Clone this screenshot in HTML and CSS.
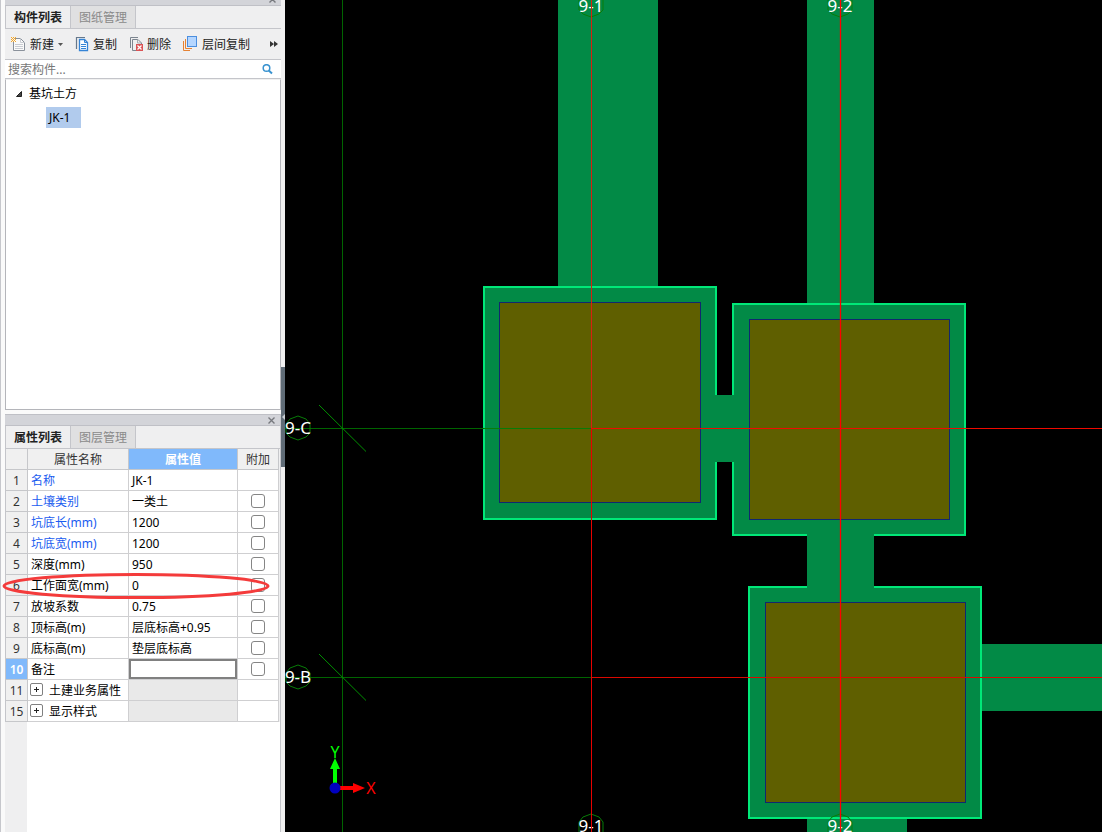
FILE: index.html
```html
<!DOCTYPE html>
<html lang="zh-CN">
<head>
<meta charset="utf-8">
<title>构件列表</title>
<link rel="stylesheet" href="styles.css">
</head>
<body>
<div class="app">
  <aside class="sidebar">
    <section class="panel components">
      <div class="titlebar cut"><button class="close" aria-label="关闭"><svg width="7" height="7" viewBox="0 0 7 7"><path d="M0.5 0.5L6.5 6.5M6.5 0.5L0.5 6.5"/></svg></button></div>
      <div class="tabs">
        <button class="tab active">构件列表</button>
        <button class="tab">图纸管理</button>
      </div>
      <div class="toolbar">
        <button class="tool new">
          <svg width="16" height="16" viewBox="0 0 16 16"><path d="M5 2.500H10.500L14.500 6.500V14.500H3.500V6" fill="#fafafa" stroke="#8a919b"/><path d="M10.500 2.500V6.500H14.500M5 8.500H13M5 10.500H13M5 12.500H13" fill="none" stroke="#c9ccd2"/><path d="M1 1.500H6M1 3.500H6M1 5.500H6" stroke="#f6a828" stroke-dasharray="1 1"/><path d="M2 2.500H5M2 4.500H5" stroke="#f6a828" stroke-dasharray="1 1"/></svg>
          <span>新建</span><svg class="caret" width="5" height="3" viewBox="0 0 5 3"><path d="M0 0H5L2.500 3Z" fill="#555"/></svg>
        </button>
        <button class="tool copy">
          <svg width="14" height="16" viewBox="0 0 14 16"><path d="M1.500 13V1.500H10" fill="none" stroke="#66788c" stroke-width="1.200"/><path d="M4.500 3.500H9.500L12.500 6.500V14.500H4.500Z" fill="#fff" stroke="#3584d6" stroke-width="1.300"/><path d="M9.500 3.500V6.500H12.500M6 8.500H11M6 10.500H11M6 12.500H11" fill="none" stroke="#3584d6"/></svg>
          <span>复制</span>
        </button>
        <button class="tool delete">
          <svg width="15" height="16" viewBox="0 0 15 16"><path d="M1.500 12V1.500H9" fill="none" stroke="#7c858f"/><path d="M7 14.500H3.500V3.500H9L12.500 7V8" fill="none" stroke="#7c858f"/><path d="M8.500 3.500V7H12" fill="none" stroke="#a8adb3"/><rect x="7" y="8" width="7" height="7" fill="#db5355"/><path d="M8.500 9.500L12.500 13.500M12.500 9.500L8.500 13.500" stroke="#fff" stroke-width="1.200"/></svg>
          <span>删除</span>
        </button>
        <button class="tool floor">
          <svg width="15" height="16" viewBox="0 0 15 16"><path d="M0.500 5V14.500H7M2.500 3V12.500H9" fill="none" stroke="#e58234"/><rect x="4.500" y="0.500" width="9" height="10" fill="#b5d6ff" stroke="#4c8ede"/></svg>
          <span>层间复制</span>
        </button>
        <button class="more" aria-label="更多"><svg width="8" height="6" viewBox="0 0 8 6"><path d="M0 0L4 3L0 6ZM4 0L8 3L4 6Z" fill="#333"/></svg></button>
      </div>
      <div class="search">
        <input type="text" placeholder="搜索构件..." aria-label="搜索构件">
        <svg width="11" height="11" viewBox="0 0 11 11"><circle cx="4.500" cy="4" r="3.300" fill="none" stroke="#3a93d0" stroke-width="1.500"/><path d="M6.800 6.500L10 9.500" stroke="#3a93d0" stroke-width="2"/></svg>
      </div>
      <div class="tree">
        <div class="node"><svg width="6" height="6" viewBox="0 0 6 6"><path d="M5.500 0.500V5.500H0.500Z" fill="#444" stroke="#222"/></svg><span>基坑土方</span></div>
        <div class="leaf"><span>JK-1</span></div>
      </div>
    </section>
    <section class="panel properties">
      <div class="titlebar"><button class="close" aria-label="关闭"><svg width="7" height="7" viewBox="0 0 7 7"><path d="M0.500 0.500L6.500 6.500M6.500 0.500L0.500 6.500"/></svg></button></div>
      <div class="tabs">
        <button class="tab active">属性列表</button>
        <button class="tab">图层管理</button>
      </div>
      <table class="grid">
        <colgroup><col class="c-num"><col class="c-name"><col class="c-value"><col class="c-add"></colgroup>
        <thead><tr><th></th><th>属性名称</th><th class="current">属性值</th><th>附加</th></tr></thead>
        <tbody>
          <tr><th>1</th><td class="key">名称</td><td>JK-1</td><td></td></tr>
          <tr><th>2</th><td class="key">土壤类别</td><td>一类土</td><td class="add"><input type="checkbox" aria-label="附加 土壤类别"></td></tr>
          <tr><th>3</th><td class="key">坑底长(mm)</td><td>1200</td><td class="add"><input type="checkbox" aria-label="附加 坑底长"></td></tr>
          <tr><th>4</th><td class="key">坑底宽(mm)</td><td>1200</td><td class="add"><input type="checkbox" aria-label="附加 坑底宽"></td></tr>
          <tr><th>5</th><td>深度(mm)</td><td>950</td><td class="add"><input type="checkbox" aria-label="附加 深度"></td></tr>
          <tr><th class="marked">6<svg class="ring" width="268" height="28" viewBox="0 0 268 28"><ellipse cx="134" cy="14" rx="132" ry="11.500" fill="none" stroke="#f43b3b" stroke-width="3"/></svg></th><td>工作面宽(mm)</td><td>0</td><td class="add"><input type="checkbox" aria-label="附加 工作面宽"></td></tr>
          <tr><th>7</th><td>放坡系数</td><td>0.75</td><td class="add"><input type="checkbox" aria-label="附加 放坡系数"></td></tr>
          <tr><th>8</th><td>顶标高(m)</td><td>层底标高+0.95</td><td class="add"><input type="checkbox" aria-label="附加 顶标高"></td></tr>
          <tr><th>9</th><td>底标高(m)</td><td>垫层底标高</td><td class="add"><input type="checkbox" aria-label="附加 底标高"></td></tr>
          <tr><th class="current">10</th><td>备注</td><td class="edit"><input type="text" aria-label="备注"></td><td class="add"><input type="checkbox" aria-label="附加 备注"></td></tr>
          <tr><th>11</th><td class="group"><div><button class="expand" aria-label="展开"><svg width="5" height="5" viewBox="0 0 5 5"><path d="M0 2.500H5M2.500 0V5"/></svg></button><span>土建业务属性</span></div></td><td class="off"></td><td></td></tr>
          <tr><th>15</th><td class="group"><div><button class="expand" aria-label="展开"><svg width="5" height="5" viewBox="0 0 5 5"><path d="M0 2.500H5M2.500 0V5"/></svg></button><span>显示样式</span></div></td><td class="off"></td><td></td></tr>
        </tbody>
      </table>
      <div class="rest"></div>
    </section>
  </aside>
  <div class="splitter"><button class="handle" aria-label="收起"><svg width="4" height="6" viewBox="0 0 4 6"><path d="M4 0V6L1 3Z" fill="#c8ced4"/></svg></button></div>
  <main class="canvas">
    <svg class="drawing" width="100%" height="100%">
      <g transform="translate(-285 0)">
        <g fill="#028a46">
          <rect x="558" y="0" width="100" height="287"/>
          <rect x="807" y="0" width="67" height="304"/>
          <rect x="807" y="819" width="100" height="400"/>
          <rect x="982" y="644" width="1000" height="67"/>
        </g>
        <g fill="#028a46" stroke="#00e878" stroke-width="2">
          <rect x="484" y="287" width="232" height="232"/>
          <rect x="733" y="304" width="232" height="231"/>
          <rect x="749" y="587" width="232" height="231"/>
        </g>
        <g fill="#028a46">
          <rect x="714" y="395" width="21" height="67"/>
          <rect x="807" y="533" width="67" height="56"/>
        </g>
        <g fill="#5f5f00" stroke="#102870">
          <rect x="499.500" y="302.500" width="201" height="200"/>
          <rect x="749.500" y="319.500" width="200" height="200"/>
          <rect x="765.500" y="602.500" width="200" height="200"/>
        </g>
        <g fill="none" stroke="#087c08">
          <path d="M342.500 0V2000M285 428.500H591M285 677.500H591" stroke="#006400"/>
          <path d="M484 428.500H591"/>
          <path d="M319 405L366 451.500M319 654L366 700.500" stroke="#009000"/>
          <path d="M298 416L306 419L310 424V433L306 437L298 440L290 437L286 433V424L290 419ZM298 665L306 668L310 673V682L306 686L298 689L290 686L286 682V673L290 668Z"/>
          <path d="M579 0V10L583 14L591 17L599 14L603 10V0M828 0V10L832 14L840 17L848 14L852 10V0M579 832V822L583 817L591 814L599 817L603 822V832M828 832V822L832 817L840 814L848 817L852 822V832"/>
        </g>
        <g class="axis-label" text-anchor="middle">
          <text x="298" y="434">9-C</text><text x="298" y="683">9-B</text>
          <text x="591" y="12">9-1</text><text x="840" y="12">9-2</text>
          <text x="591" y="832">9-1</text><text x="840" y="832">9-2</text>
        </g>
        <g fill="none">
          <path d="M591.500 0V428" stroke="#d82010"/>
          <path d="M591.500 428V2000" stroke="#e80000"/>
          <path d="M591 428.500H2000" stroke="#f00a00"/>
          <path d="M591 677.500H2000" stroke="#dc0800"/>
          <path d="M840.500 0V2000" stroke="#f00" stroke-width="1.300"/>
        </g>
        <path d="M333 786V769H330L335 758L340 769H337V786Z" fill="#0f0"/>
        <path d="M338 786H353V783L365 788L353 793V790H338Z" fill="#f00"/>
        <circle cx="335" cy="788" r="5.500" fill="#0000c0"/>
        <g class="ucs" text-anchor="middle"><text x="335" y="758" fill="#0f0">Y</text><text x="371" y="794" fill="#f00">X</text></g>
      </g>
    </svg>
  </main>
</div>
</body>
</html>
```

FILE: styles.css
```css
* { box-sizing: border-box; }
body {
  margin: 0;
  font: 12px/16px "Noto Sans", "Noto Sans CJK SC", sans-serif;
  color: #000;
}
button, input { font: inherit; color: inherit; margin: 0; padding: 0; border: 0; background: none; }
svg { display: block; flex: none; }

.app { display: flex; height: 100vh; overflow: hidden; background: #f0f0f0; }
.sidebar {
  flex: none;
  width: 281px;
  display: flex;
  flex-direction: column;
  gap: 4px;
  padding-left: 4px;
  border-left: 1px solid #c6c7cc;
  background: #fafafa;
}
.panel { display: flex; flex-direction: column; background: #efeff0; }
.components { height: 410px; }
.properties { flex: 1; border-right: 1px solid #c4c5ca; }

.titlebar {
  display: flex;
  flex: none;
  justify-content: flex-end;
  align-items: center;
  height: 12px;
  padding-right: 5px;
  background: #d3d4d9;
  border: 1px solid #bfc0c6;
  border-width: 1px 0;
  overflow: hidden;
}
.titlebar.cut { height: 6px; align-items: flex-end; border-top: 0; padding-bottom: 2px; }
.close svg { fill: none; stroke: #77797e; stroke-width: 1.4; }

.tabs { display: flex; flex: none; height: 23px; border-left: 1px solid #c4c5ca; border-bottom: 1px solid #c4c5ca; }
.tab { width: 65px; padding-top: 2px; border-right: 1px solid #c4c5ca; color: #8a8a8a; background: #e0e0e1; }
.tab.active { color: #222; font-weight: 600; background: #efeff0; }

.toolbar {
  display: flex;
  flex: none;
  align-items: center;
  height: 31px;
  padding: 0 3px 0 5px;
  gap: 12px;
  border-bottom: 1px solid #c4c5ca;
  color: #222;
}
.tool { display: flex; align-items: center; gap: 4px; white-space: nowrap; }
.tool span { padding-top: 2px; }
.delete { gap: 3px; }
.more { margin-left: auto; }

.search {
  display: flex;
  flex: none;
  align-items: center;
  height: 19px;
  padding: 0 8px 0 3px;
  background: #fff;
  border-bottom: 1px solid #c4c5ca;
}
.search input { flex: 1; min-width: 0; padding-top: 2px; outline: 0; }
.search input::placeholder { color: #777; opacity: 1; }

.tree { flex: 1; padding-top: 3px; background: #fff; border: 1px solid #b4b5ba; border-top-color: #f0f0f0; }
.node { display: flex; align-items: center; gap: 7px; height: 22px; padding-left: 10px; }
.leaf { display: flex; padding: 2px 0 0 40px; }
.leaf span { padding: 3px 8px 2px 3px; background: #b1cbed; min-width: 35px; }

.grid { width: 274px; border-collapse: separate; border-spacing: 0; table-layout: fixed; background: #fff; }
.c-num { width: 23px; }
.c-name { width: 101px; }
.c-value { width: 109px; }
.c-add { width: 41px; }
.grid th, .grid td {
  height: 21px;
  padding: 2px 0 0;
  border-right: 1px solid #cfcfd1;
  border-bottom: 1px solid #cfcfd1;
  font-weight: 400;
  white-space: nowrap;
}
.grid th { background: #f0f0f0; border-color: #c6c7ca; color: #333; text-align: center; }
.grid tbody th:first-child, .grid thead th:first-child { border-left: 1px solid #c4c5ca; }
.grid th.current { background: #80b9fb; color: #fff; font-weight: 600; }
.grid td { padding-left: 3px; }
.grid td.key { color: #1a5cf0; }
.grid td.add { padding: 0; }
.grid td.off { background: #e9e9e9; }
.add input {
  display: block;
  appearance: none;
  width: 14px;
  height: 14px;
  margin: 0 auto;
  border: 1px solid #858585;
  border-radius: 3px;
  background: #fff;
}
.grid td.edit { padding: 0; }
.edit input { display: block; width: 100%; height: 20px; border: 2px solid #808080; outline: 0; background: #fff; }
.group div { display: flex; align-items: flex-start; gap: 6px; }
.expand {
  display: flex;
  align-items: center;
  justify-content: center;
  width: 13px;
  height: 13px;
  border: 1px solid #808080;
  border-radius: 2px;
  background: #fff;
}
.expand svg { stroke: #222; }
.grid td.group { padding-left: 2px; }
.marked { position: relative; }
.ring { position: absolute; z-index: 1; left: -4px; top: -3px; pointer-events: none; }
.rest { flex: 1; margin-left: 22px; background: #fff; }

.splitter { flex: none; width: 4px; display: flex; flex-direction: column; justify-content: center; padding-top: 2px; }
.handle { display: flex; align-items: center; height: 100px; background: #606c77; }

.canvas { flex: 1; min-width: 0; background: #000; overflow: hidden; }
.axis-label { font: 17px "Noto Sans", sans-serif; fill: #fff; }
.ucs { font: 16px "Noto Sans", sans-serif; }
```
